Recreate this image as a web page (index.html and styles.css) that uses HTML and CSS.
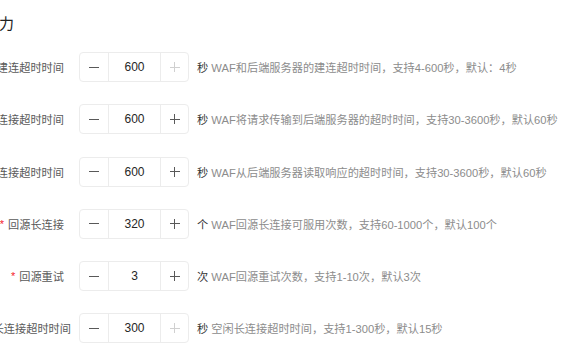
FILE: index.html
```html
<!DOCTYPE html>
<html lang="zh-CN">
<head>
<meta charset="utf-8">
<link rel="stylesheet" href="styles.css">
</head>
<body>
<div class="page">
  <h2 class="title">回源能力</h2>
  <div class="form">
    <div class="row">
      <div class="label"><span class="text">回源建连超时时间</span></div>
      <div class="stepper">
        <span class="btn"><span class="minus"></span></span>
        <span class="value">600</span>
        <span class="btn disabled"><span class="plus"></span></span>
      </div>
      <div class="help"><span class="unit">秒</span> WAF和后端服务器的建连超时时间，支持4-600秒，默认：4秒</div>
    </div>
    <div class="row">
      <div class="label"><span class="text">回源写连接超时时间</span></div>
      <div class="stepper">
        <span class="btn"><span class="minus"></span></span>
        <span class="value">600</span>
        <span class="btn"><span class="plus"></span></span>
      </div>
      <div class="help"><span class="unit">秒</span> WAF将请求传输到后端服务器的超时时间，支持30-3600秒，默认60秒</div>
    </div>
    <div class="row">
      <div class="label"><span class="text">回源读连接超时时间</span></div>
      <div class="stepper">
        <span class="btn"><span class="minus"></span></span>
        <span class="value">600</span>
        <span class="btn"><span class="plus"></span></span>
      </div>
      <div class="help"><span class="unit">秒</span> WAF从后端服务器读取响应的超时时间，支持30-3600秒，默认60秒</div>
    </div>
    <div class="row">
      <div class="label"><span class="req">*</span><span class="text">回源长连接</span></div>
      <div class="stepper">
        <span class="btn"><span class="minus"></span></span>
        <span class="value">320</span>
        <span class="btn"><span class="plus"></span></span>
      </div>
      <div class="help"><span class="unit">个</span> WAF回源长连接可服用次数，支持60-1000个，默认100个</div>
    </div>
    <div class="row">
      <div class="label"><span class="req">*</span><span class="text">回源重试</span></div>
      <div class="stepper">
        <span class="btn"><span class="minus"></span></span>
        <span class="value">3</span>
        <span class="btn"><span class="plus"></span></span>
      </div>
      <div class="help"><span class="unit">次</span> WAF回源重试次数，支持1-10次，默认3次</div>
    </div>
    <div class="row">
      <div class="label label-wide"><span class="text">空闲长连接超时时间</span></div>
      <div class="stepper">
        <span class="btn"><span class="minus"></span></span>
        <span class="value">300</span>
        <span class="btn disabled"><span class="plus"></span></span>
      </div>
      <div class="help"><span class="unit">秒</span> 空闲长连接超时时间，支持1-300秒，默认15秒</div>
    </div>
  </div>
</div>
</body>
</html>
```

FILE: styles.css
```css
html, body {
  margin: 0;
  padding: 0;
  background: #ffffff;
  overflow: hidden;
}
body {
  font-family: "Liberation Sans", "Noto Sans CJK SC", sans-serif;
  color: #333;
}
.page {
  width: 576px;
  height: 356px;
}
.title {
  margin: 0;
  padding-top: 12px;
  height: 24px;
  line-height: 24px;
  font-size: 15px;
  font-weight: normal;
  color: #222;
  display: flex;
  justify-content: flex-end;
  width: 14px;
  white-space: nowrap;
}
.form {
  margin-top: 16px;
  display: flex;
  flex-direction: column;
  gap: 22.25px;
}
.row {
  display: flex;
  align-items: center;
  height: 30px;
}
.label {
  width: 79px;
  flex: none;
  box-sizing: border-box;
  padding-right: 15px;
  display: flex;
  justify-content: flex-end;
  align-items: center;
  white-space: nowrap;
  font-size: 11.2px;
  color: #595959;
}
.label-wide {
  padding-right: 8px;
}
.req {
  color: #f5222d;
  margin-right: 4px;
  font-size: 11px;
  font-family: "Liberation Sans", sans-serif;
}
.stepper {
  width: 110px;
  height: 30px;
  box-sizing: border-box;
  border: 1px solid #ececec;
  border-radius: 4px;
  display: flex;
  flex: none;
}
.btn {
  width: 28px;
  display: flex;
  align-items: center;
  justify-content: center;
  flex: none;
}
.btn:last-child {
  border-left: 1px solid #ececec;
  width: 27px;
}
.btn:first-child {
  border-right: 1px solid #ececec;
}
.value {
  flex: 1;
  display: flex;
  align-items: center;
  justify-content: center;
  font-size: 12px;
  color: #262626;
}
.minus, .plus {
  position: relative;
  width: 10px;
  height: 10px;
  display: block;
}
.minus::before, .plus::before, .plus::after {
  content: "";
  position: absolute;
  background: #595959;
}
.minus::before, .plus::before {
  left: 0;
  top: 4.5px;
  width: 10px;
  height: 1px;
}
.plus::after {
  left: 4.5px;
  top: 0;
  width: 1px;
  height: 10px;
}
.disabled .plus::before, .disabled .plus::after {
  background: #d0d0d0;
}
.help {
  margin-left: 8px;
  font-size: 11.2px;
  color: #8c8c8c;
  white-space: nowrap;
}
.unit {
  color: #333;
}
```
